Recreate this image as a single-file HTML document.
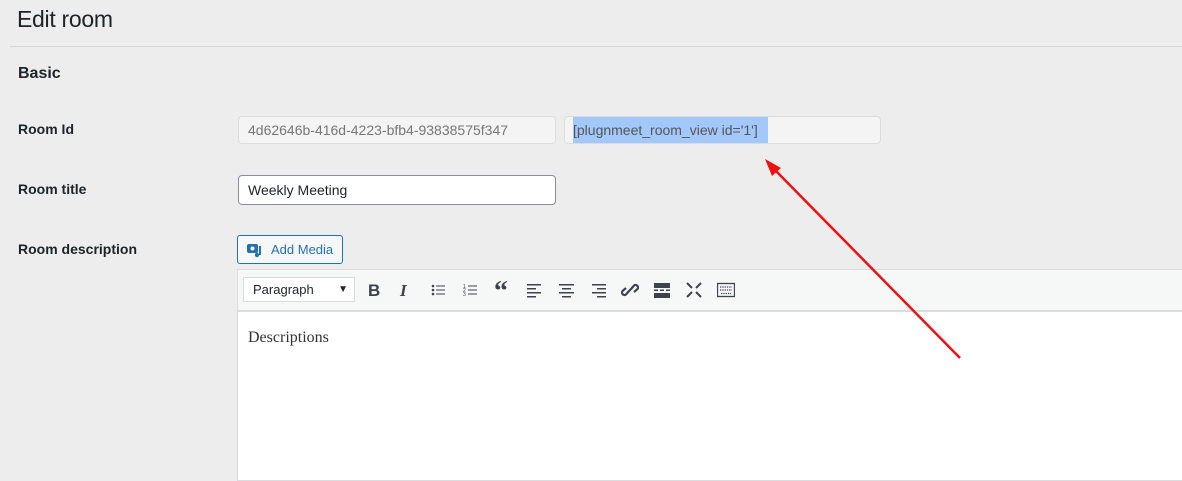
<!DOCTYPE html>
<html><head><style>
body{margin:0;width:1182px;height:473px;background:#ededed;font-family:"Liberation Sans",sans-serif;color:#1d2327;position:relative;overflow:hidden}
.a{position:absolute}
h1{position:absolute;left:17px;top:6px;margin:0;font-size:23px;font-weight:400;letter-spacing:-0.3px}
.lbl{position:absolute;left:18px;font-size:14px;font-weight:bold}
.inp{position:absolute;box-sizing:border-box;border:1px solid #dcdcde;border-radius:4px;background:#f4f4f4;font-size:14px;color:#777;padding:0 9px;line-height:26px}
.ic{position:absolute;top:281px;width:18px;height:18px}
</style></head><body>
<h1>Edit room</h1>
<div class="a" style="left:10px;top:46px;width:1172px;height:1px;background:#d6d6d6"></div>
<div class="a" style="left:18px;top:65px;font-size:16px;font-weight:bold">Basic</div>
<div class="lbl" style="top:121px">Room Id</div>
<div class="lbl" style="top:181px">Room title</div>
<div class="lbl" style="top:241px">Room description</div>
<div class="inp" style="left:238px;top:116px;width:318px;height:28px">4d62646b-416d-4223-bfb4-93838575f347</div>
<div class="inp" style="left:564px;top:116px;width:317px;height:28px;padding:0"><span style="display:inline-block;margin-left:8px;background:#a3c8fb;color:#555;height:26px;width:195px">[plugnmeet_room_view id='1']</span></div>
<div class="inp" style="left:238px;top:175px;width:318px;height:30px;background:#fff;border-color:#8c8f94;color:#1d2327;line-height:28px">Weekly Meeting</div>
<div class="a" style="left:237px;top:235px;width:106px;height:29px;box-sizing:border-box;border:1px solid #2271b1;border-radius:3px;background:#f6f7f7;color:#2271b1;font-size:13px;line-height:27px;padding-left:33px">Add Media</div>
<svg class="a" style="left:246px;top:242px" width="18" height="16" viewBox="0 0 18 16"><rect x="1" y="2" width="11" height="9" rx="2" fill="#2271b1"/><circle cx="6.5" cy="6.5" r="2" fill="#f6f7f7"/><path d="M14 4v9" stroke="#2271b1" stroke-width="2"/><circle cx="11" cy="13" r="2.2" fill="#2271b1"/></svg>
<div class="a" style="left:237px;top:269px;width:950px;height:210px;border:1px solid #dcdcde;background:#fff"></div>
<div class="a" style="left:238px;top:270px;width:950px;height:40px;background:#f6f7f7;border-bottom:2px solid #dcdcde"></div>
<div class="a" style="left:243px;top:277px;width:112px;height:25px;box-sizing:border-box;border:1px solid #dcdcde;background:#fff;font-size:13px;line-height:23px;padding-left:9px">Paragraph<span style="position:absolute;right:6px;top:0;font-size:10px">▼</span></div>
<div class="a" style="left:368px;top:281px;font-size:17px;font-weight:bold;color:#3c434a;font-family:'Liberation Sans'">B</div>
<div class="a" style="left:400px;top:281px;font-size:17px;font-weight:bold;font-style:italic;color:#3c434a;font-family:'Liberation Serif'">I</div>
<svg class="ic" style="left:430px" viewBox="0 0 18 18" fill="#3c434a"><circle cx="3" cy="5" r="1.3"/><circle cx="3" cy="9" r="1.3"/><circle cx="3" cy="13" r="1.3"/><path d="M6 4.5h9v1H6zM6 8.5h9v1H6zM6 12.5h9v1H6z"/></svg>
<svg class="ic" style="left:462px" viewBox="0 0 18 18" fill="#3c434a"><text x="1" y="7" font-size="5">1</text><text x="1" y="11" font-size="5">2</text><text x="1" y="15" font-size="5">3</text><path d="M6 4.5h9v1H6zM6 8.5h9v1H6zM6 12.5h9v1H6z"/></svg>
<div class="a" style="left:494px;top:276px;font-size:28px;font-weight:bold;color:#3c434a;font-family:'Liberation Serif'">“</div>
<svg class="ic" style="left:526px" viewBox="0 0 18 18" fill="#3c434a"><path d="M1 3h14v1.5H1zM1 7h9v1.5H1zM1 11h14v1.5H1zM1 15h9v1.5H1z"/></svg>
<svg class="ic" style="left:558px" viewBox="0 0 18 18" fill="#3c434a"><path d="M1 3h15v1.5H1zM4 7h9v1.5H4zM1 11h15v1.5H1zM4 15h9v1.5H4z"/></svg>
<svg class="ic" style="left:590px" viewBox="0 0 18 18" fill="#3c434a"><path d="M2 3h14v1.5H2zM7 7h9v1.5H7zM2 11h14v1.5H2zM7 15h9v1.5H7z"/></svg>
<svg class="ic" style="left:621px" viewBox="0 0 18 18" fill="none" stroke="#3c434a" stroke-width="2.2"><path d="M8 10l-3 3.5a2.5 2.5 0 0 1-3.5-3.5l3.5-3M10 8l3-3.5a2.5 2.5 0 0 1 3.5 3.5l-3.5 3M6 12l6-6"/></svg>
<svg class="ic" style="left:653px" viewBox="0 0 18 18" fill="#3c434a"><path d="M1 2h16v5H1zM1 8.5h4v1.5H1zM7 8.5h4v1.5H7zM13 8.5h4v1.5h-4zM1 12h16v5H1z"/></svg>
<svg class="ic" style="left:685px" viewBox="0 0 18 18" fill="none" stroke="#3c434a" stroke-width="2"><path d="M2 2l5 5M16 2l-5 5M2 16l5-5M16 16l-5-5"/></svg>
<svg class="ic" style="left:717px" viewBox="0 0 18 18" fill="none" stroke="#3c434a" stroke-width="1.3"><rect x="0.5" y="2.5" width="17" height="13"/><path d="M3 6h12M3 9h12M4 12.5h10" stroke-dasharray="1.3 1"/></svg>
<div class="a" style="left:248px;top:329px;font-family:'Liberation Serif',serif;font-size:16px;color:#333">Descriptions</div>
<svg class="a" style="left:0;top:0" width="1182" height="473"><line x1="960" y1="358" x2="775" y2="170" stroke="#f01010" stroke-width="2.5"/><polygon points="765,159 781,168 772,176" fill="#f01010"/></svg>
</body></html>
